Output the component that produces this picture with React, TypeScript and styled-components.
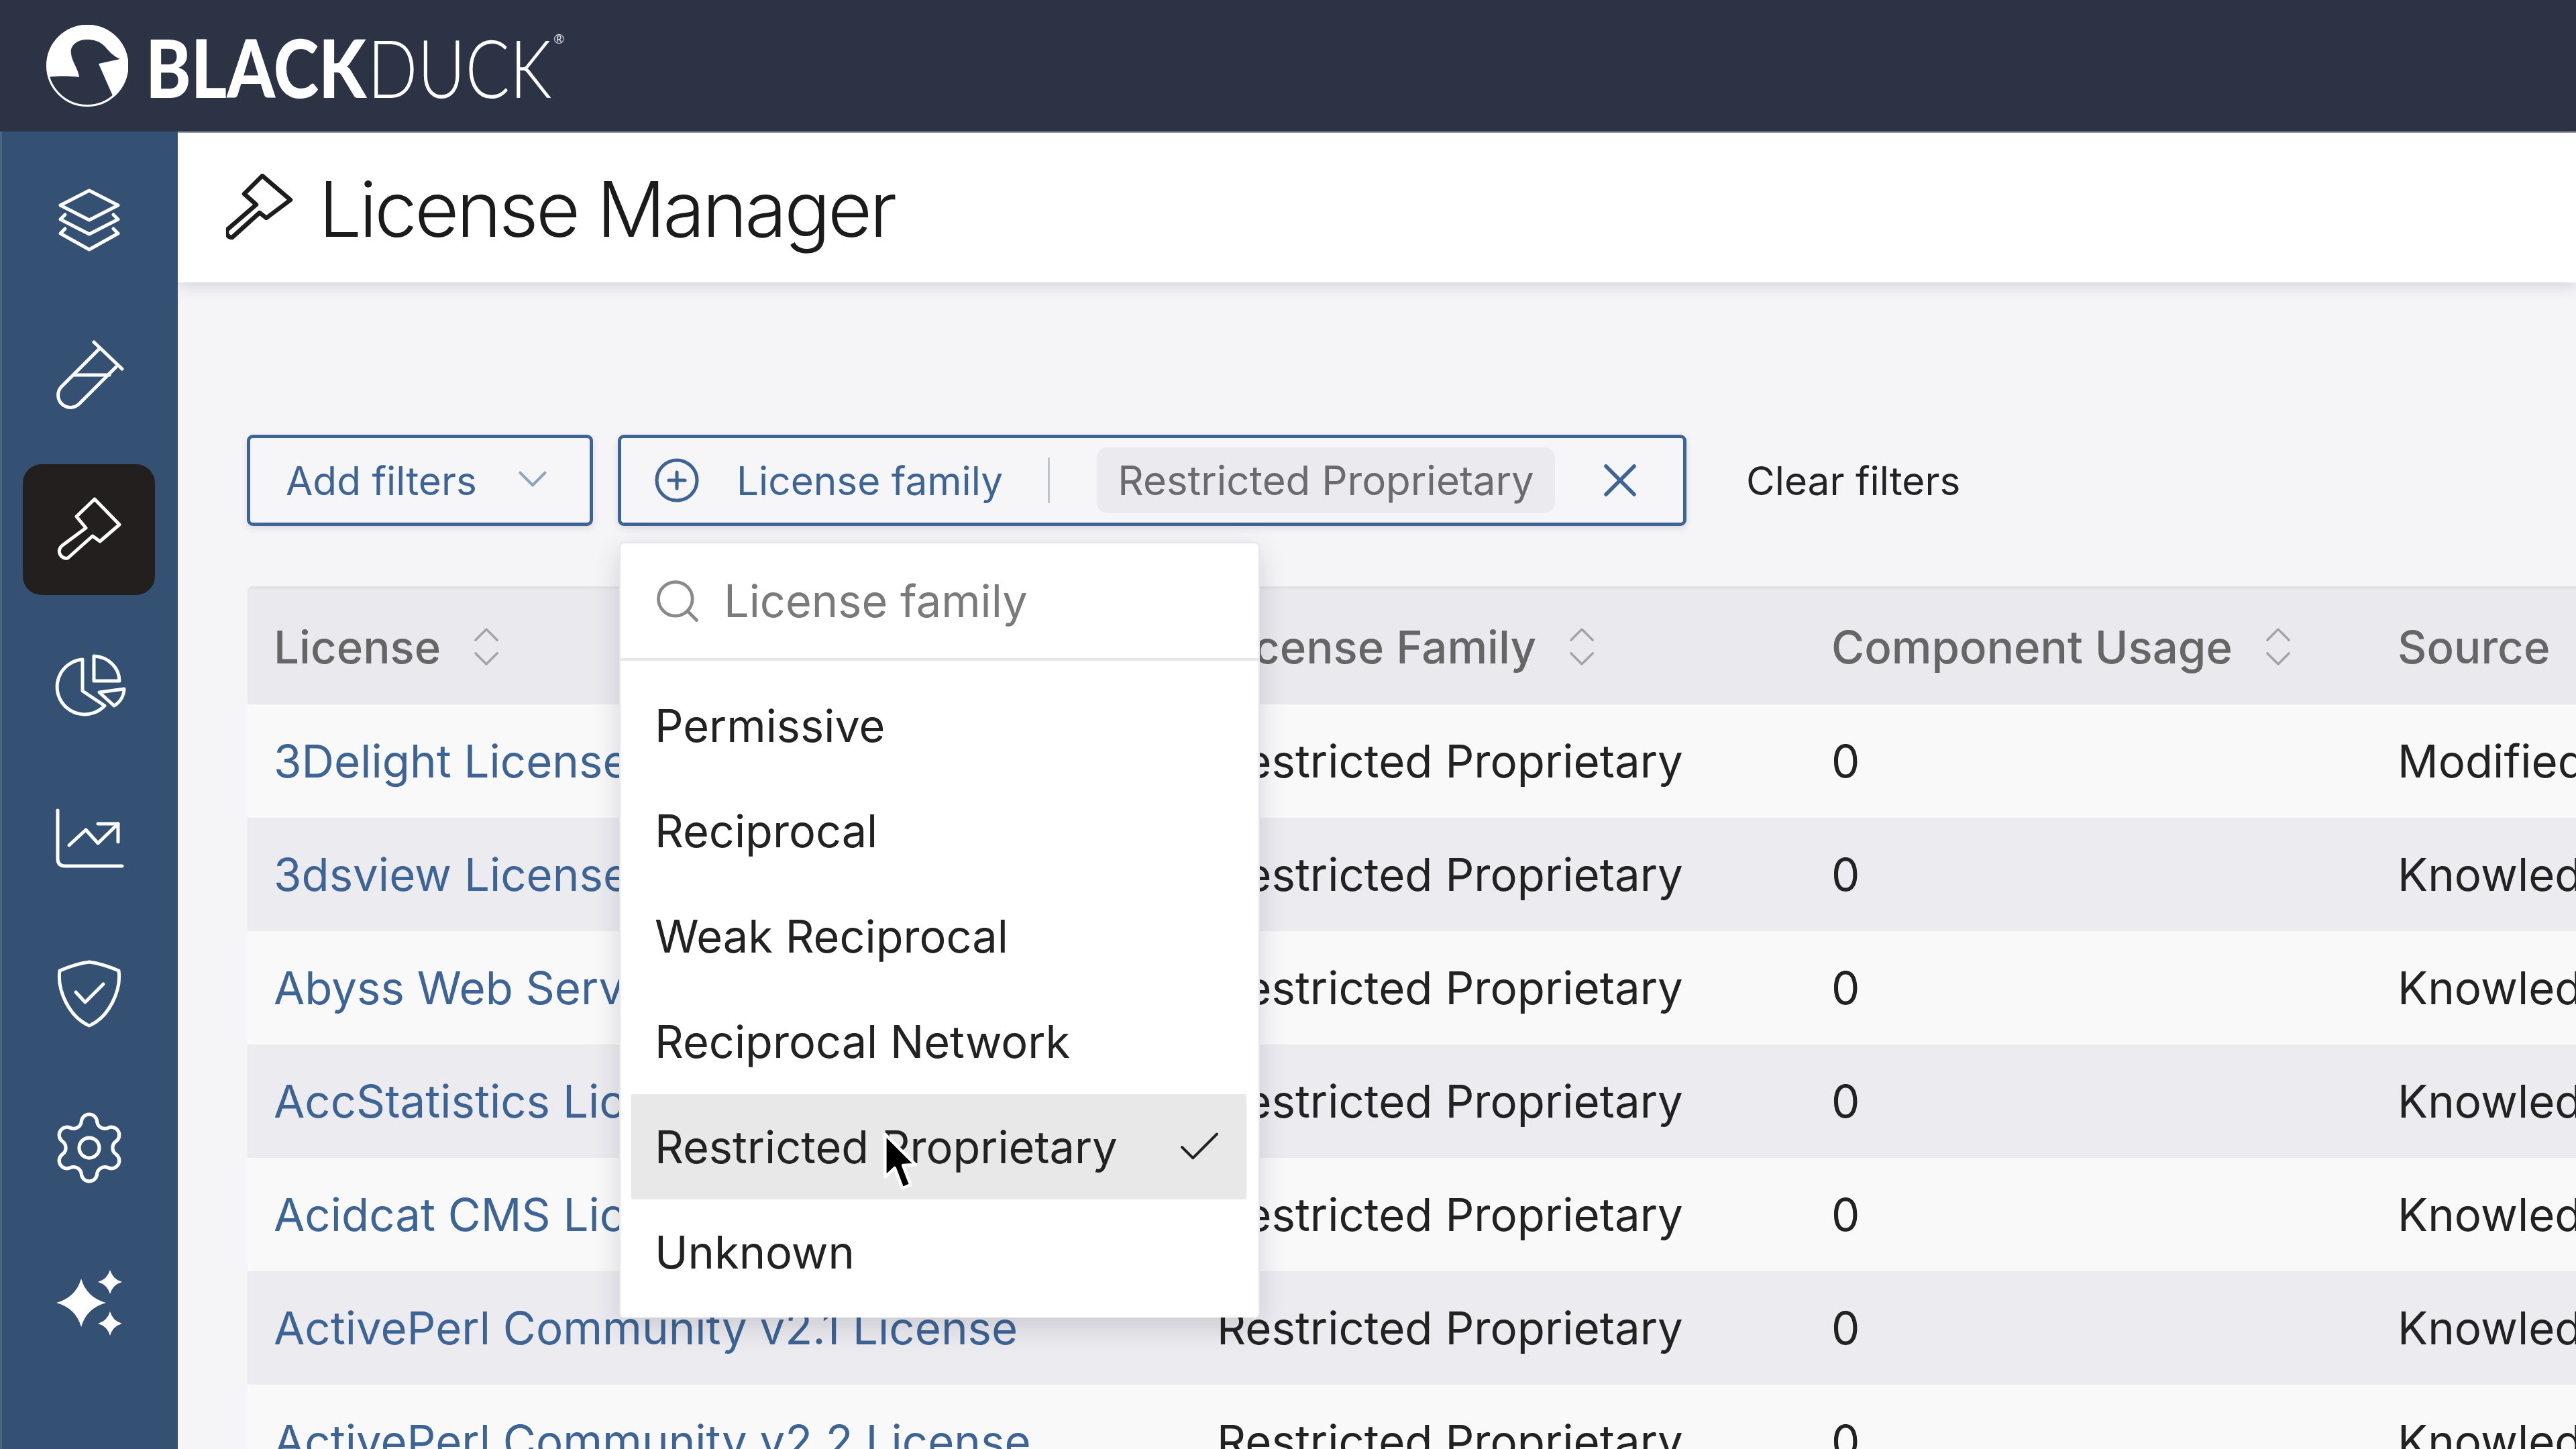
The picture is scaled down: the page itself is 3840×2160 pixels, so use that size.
import React from "react";
import styled, { createGlobalStyle } from "styled-components";
import { Check, ChevronDown, ChevronsUpDown, CirclePlus, Search, Settings, X } from "lucide-react";

const Global = createGlobalStyle`
  html, body { margin: 0; padding: 0; width: 3840px; height: 2160px; overflow: hidden; background: #f5f5f8; }
  body { font-family: Inter, "Liberation Sans", sans-serif; color: #222; }
  * { box-sizing: border-box; }
`;

const Page = styled.div`
  width: 3840px; height: 2160px; display: flex; flex-direction: column; overflow: hidden;
`;
const TopBar = styled.header`
  height: 196px; flex: none; background: #2c3345; display: flex; align-items: center; padding-left: 69px; position: relative; z-index: 3;
`;
const LogoMark = styled.svg` width: 122px; height: 122px; flex: none; `;
const Wordmark = styled.div`
  margin-left: 26px; display: flex; align-items: flex-start; color: #fff; line-height: 1; height: 120px; margin-top: 2px;
  font-family: Lato, Inter, sans-serif; font-size: 121px;
`;
const Black = styled.span`
  font-weight: 900; width: 331px; display: block; transform: scaleX(0.845); transform-origin: left center; white-space: nowrap;
`;
const Duck = styled.span`
  font-weight: 300; width: 277px; display: block; transform: scaleX(0.81); transform-origin: left center; white-space: nowrap;
`;
const Reg = styled.span` font-size: 20px; font-weight: 400; line-height: 1; margin-top: 8px; opacity: 0.85; `;

const Body = styled.div` flex: 1; display: flex; min-height: 0; `;
const Sidebar = styled.nav`
  width: 265px; flex: none; background: #345073; border-left: 3px solid #4b6583; padding-top: 17px;
  display: flex; flex-direction: column; align-items: center; position: relative; z-index: 2; padding-right: 3px;
`;
const NavItem = styled.div<{ $active?: boolean }>`
  height: 230.5px; flex: none; display: flex; align-items: center; justify-content: center; position: relative;
  width: 197px;
  &::before {
    content: ""; display: ${(p) => (p.$active ? "block" : "none")}; position: absolute; left: 0; top: 18px; width: 197px; height: 195px;
    background: #231f1e; border-radius: 28px;
  }
  svg { position: relative; display: block; }
`;
const NavSvg = styled.svg`
  width: 100px; height: 100px; fill: none; stroke: #fff; stroke-width: 5px; stroke-linecap: round; stroke-linejoin: round; overflow: visible;
`;
const SolidSvg = styled.svg` width: 100px; height: 100px; fill: #fff; `;

const Main = styled.main` flex: 1; min-width: 0; display: flex; flex-direction: column; border-top: 2px solid #9a9faa; `;
const TitleBar = styled.div`
  height: 223px; flex: none; background: #fff; display: flex; align-items: center; padding-left: 72px; gap: 38px;
  box-shadow: 0 4px 22px rgba(40, 44, 60, 0.18); position: relative; z-index: 1;
`;
const TitleIcon = styled.svg`
  width: 100px; height: 100px; fill: none; stroke: #1d1d1d; stroke-width: 6.5px; stroke-linejoin: round; stroke-linecap: round; flex: none; margin-top: -2px;
`;
const Title = styled.h1`
  margin: 4px 0 0; font-size: 114px; font-weight: 300; color: #1b1b1b; line-height: 1; letter-spacing: -3.8px;
`;
const Content = styled.div` padding: 227px 0 0 103px; flex: 1; min-height: 0; `;
const FilterBar = styled.div` display: flex; align-items: center; height: 136px; `;
const OutlineBox = styled.div`
  height: 136px; border: 5px solid #3d6494; border-radius: 9px; display: flex; align-items: center; color: #3d6494;
  font-size: 58.5px; background: #f6f6f9; box-shadow: 0 4px 10px rgba(40, 44, 60, 0.12);
`;
const AddFilters = styled(OutlineBox)` width: 516px; padding-left: 53px; gap: 46px; svg { color: #8ea3bf; margin-top: -4px; } `;
const FilterField = styled(OutlineBox)`
  width: 1593px; margin-left: 37px; padding-left: 53px; position: relative;
`;
const FieldLabel = styled.span` margin-left: 59px; width: 464px; flex: none; `;
const Divider = styled.span` width: 3px; height: 68px; background: #bfc3cb; flex: none; `;
const Chip = styled.span`
  margin-left: 70px; width: 683px; height: 98px; background: #ebebef; border-radius: 16px; color: #6b6b6e; flex: none;
  display: flex; align-items: center; justify-content: center; font-size: 60px;
`;
const ChipClose = styled.span` margin-left: 76px; display: flex; color: #3d6494; `;
const ClearFilters = styled.span` margin-left: 89px; font-size: 58.5px; color: #222; `;

const Dropdown = styled.div`
  position: absolute; left: -3px; top: 155px; width: 955px; height: 1156px; background: #fff; z-index: 5; border-radius: 7px;
  border: 2px solid #e6e6ea; border-bottom: none; box-shadow: 0 14px 40px rgba(30, 32, 46, 0.16);
  color: #222; font-size: 66.7px;
`;
const SearchRow = styled.div`
  height: 175px; border-bottom: 4px solid #e8e8ea; display: flex; align-items: center; padding-left: 57px; color: #7a7a7a; gap: 41px;
  svg { color: #8a8a8a; margin: 0 -10px; }
`;
const ItemList = styled.div` padding: 18px 18px 0 16px; `;
const Item = styled.div<{ $selected?: boolean }>`
  height: 157px; padding: 0 43px 0 35px; display: flex; align-items: center; justify-content: space-between; position: relative;
  background: ${(p) => (p.$selected ? "#e8e8e8" : "transparent")}; border-radius: 3px;
`;
const Cursor = styled.svg` position: absolute; left: 370px; top: 54px; width: 60px; height: 94px; overflow: visible; `;

const Table = styled.div` width: 3600px; margin: 90px 0 0 1px; position: relative; `;
const Row = styled.div<{ $dark?: boolean }>`
  height: 169px; display: flex; align-items: center; font-size: 67.2px; color: #222;
  background: ${(p) => (p.$dark ? "#ebebf0" : "#f9f9fa")};
`;
const HeadRow = styled(Row)`
  height: 176px; background: #e9e9ee; color: #666; border-top: 4px solid #e3e3e7; border-radius: 7px 7px 0 0; font-weight: 500;
  svg { color: #a3a3a6; margin-left: 29px; margin-right: -20px; flex: none; }
`;
const Cell = styled.div<{ $w: number }>`
  width: ${(p) => p.$w}px; flex: none; padding-left: 39px; white-space: nowrap; overflow: hidden; display: flex; align-items: center;
`;
const LinkText = styled.a` color: #3d6494; text-decoration: none; `;

const HammerPath = "M58 5 L95 43 L66 68 L55 60 L18 93 A10.5 10.5 0 0 1 10 74 L45 48 L31 31 Z";
const TitleHammerPath = "M54 3 L96 39 L60 66 L50 58 L9 95 A8 8 0 0 1 2 83 L45 46 L27 30 Z";

const nav = [
  <NavSvg viewBox="0 0 100 100" key="l"><path d="M50 6 L93 28 L50 50 L7 28 Z" /><path d="M14 42 L7 49 L50 71 L93 49 L86 42" /><path d="M14 63 L7 70 L50 94 L93 70 L86 63" /></NavSvg>,
  <NavSvg viewBox="0 0 100 100" key="f"><path d="M57 1 L99 41" /><path d="M66 10 L9 67 A18 18 0 0 0 35 93 L90 38" /><path d="M28 50 H80" /></NavSvg>,
  <NavSvg viewBox="0 0 100 100" key="h"><path d={HammerPath} /></NavSvg>,
  <NavSvg viewBox="-5 0 100 100" key="p"><path d="M35 13 V60 L68 82 A41 41 0 1 1 35 13 Z" /><path d="M52 8 V45 H90 A40 37 0 0 0 52 8 Z" /><path d="M60 62 L97 57 A30 30 0 0 1 82 82 Z" /></NavSvg>,
  <NavSvg viewBox="0 0 100 100" key="c"><path d="M3 8 V80 Q3 91 14 91 H99" /><path d="M20 60 L45 37 L63 57 L93 28" /><path d="M63 28 H93 V55" /></NavSvg>,
  <NavSvg viewBox="0 0 100 100" key="s"><path d="M50 3 C65 5 80 10 94 16 C98 45 80 85 50 98 C20 85 2 45 6 16 C20 10 35 5 50 3 Z" /><path d="M30 48 L44 63 L71 36" /></NavSvg>,
  <Settings key="g" size={120} strokeWidth={1.05} color="#fff" />,
  <SolidSvg viewBox="0 0 100 100" key="a"><path d="M38 14 Q46 42 75 50 Q46 58 38 86 Q30 58 1 50 Q30 42 38 14 Z" /><path d="M81 1 Q85 15 99 19 Q85 23 81 37 Q77 23 63 19 Q77 15 81 1 Z" /><path d="M81 63 Q85 77 99 81 Q85 85 81 99 Q77 85 63 81 Q77 77 81 63 Z" /></SolidSvg>,
];

const options = ["Permissive", "Reciprocal", "Weak Reciprocal", "Reciprocal Network", "Restricted Proprietary", "Unknown"];
const rows = [
  ["3Delight License", "Modified"],
  ["3dsview License", "KnowledgeBase"],
  ["Abyss Web Server License", "KnowledgeBase"],
  ["AccStatistics License", "KnowledgeBase"],
  ["Acidcat CMS License", "KnowledgeBase"],
  ["ActivePerl Community v2.1 License", "KnowledgeBase"],
  ["ActivePerl Community v2.2 License", "KnowledgeBase"],
];
const cols = [1406, 916, 844, 434];

export default function App() {
  return (
    <Page>
      <Global />
      <TopBar>
        <LogoMark viewBox="0 0 122 122">
          <circle cx="61" cy="61" r="59.5" fill="none" stroke="#fff" strokeWidth="3" />
          <path fill="#fff" d="M3 78 A61 61 0 1 1 100 108 L78 58 L110 51 C100 47 92 38 88 33 C80 24 70 22 60 22 C45 22 35 32 37 43 C38 55 48 66 49 78 C35 76 15 76 3 78 Z" />
        </LogoMark>
        <Wordmark>
          <Black>BLACK</Black>
          <Duck>DUCK</Duck>
          <Reg>®</Reg>
        </Wordmark>
      </TopBar>
      <Body>
        <Sidebar>
          {nav.map((icon, i) => (
            <NavItem key={i} $active={i === 2}>{icon}</NavItem>
          ))}
        </Sidebar>
        <Main>
          <TitleBar>
            <TitleIcon viewBox="0 0 100 100"><path d={TitleHammerPath} /></TitleIcon>
            <Title>License Manager</Title>
          </TitleBar>
          <Content>
            <FilterBar>
              <AddFilters>
                Add filters
                <ChevronDown size={74} strokeWidth={1.3} />
              </AddFilters>
              <FilterField>
                <CirclePlus size={72} strokeWidth={1.7} style={{ margin: "0 -6px" }} />
                <FieldLabel>License family</FieldLabel>
                <Divider />
                <Chip>Restricted Proprietary</Chip>
                <ChipClose><X size={84} strokeWidth={1.6} style={{ margin: "0 -21px" }} /></ChipClose>
                <Dropdown>
                  <SearchRow>
                    <Search size={76} strokeWidth={1.5} />
                    License family
                  </SearchRow>
                  <ItemList>
                    {options.map((o) => (
                      <Item key={o} $selected={o === "Restricted Proprietary"}>
                        {o}
                        {o === "Restricted Proprietary" && (
                          <>
                            <Check size={78} strokeWidth={1.2} style={{ margin: "0 -12px" }} />
                            <Cursor viewBox="0 0 58 88">
                              <path d="M8 4 L8 66 L22 53 L33 82 L45 77 L34 49 L52 48 Z" fill="#000" stroke="#fff" strokeWidth="4.5" strokeLinejoin="round" />
                            </Cursor>
                          </>
                        )}
                      </Item>
                    ))}
                  </ItemList>
                </Dropdown>
              </FilterField>
              <ClearFilters>Clear filters</ClearFilters>
            </FilterBar>
            <Table>
              <HeadRow>
                {["License", "License Family", "Component Usage", "Source"].map((h, i) => (
                  <Cell $w={cols[i]} key={h}>
                    {h}
                    {i < 3 && <ChevronsUpDown size={78} strokeWidth={1} />}
                  </Cell>
                ))}
              </HeadRow>
              {rows.map((r, i) => (
                <Row key={r[0]} $dark={i % 2 === 1}>
                  <Cell $w={cols[0]}><LinkText>{r[0]}</LinkText></Cell>
                  <Cell $w={cols[1]}>Restricted Proprietary</Cell>
                  <Cell $w={cols[2]}>0</Cell>
                  <Cell $w={cols[3]}>{r[1]}</Cell>
                </Row>
              ))}
            </Table>
          </Content>
        </Main>
      </Body>
    </Page>
  );
}
